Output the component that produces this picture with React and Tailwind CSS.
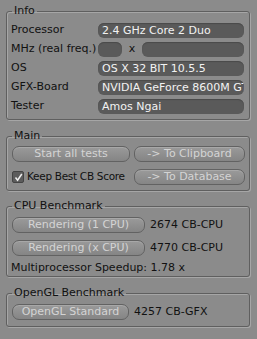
const font = { fontFamily: '"DejaVu Sans", "Liberation Sans", sans-serif' };

const boxClass =
  'mx-[6px] w-[244px] rounded-[3px] border border-[#5f5f5f] px-[4px] shadow-[inset_1px_1px_0_#a6a6a6,1px_1px_0_#a6a6a6]';
const legendClass = 'ml-[1px] h-[14px] px-[2px] leading-[14px] text-[#111]';
const fieldClass =
  'h-[15px] overflow-hidden whitespace-nowrap rounded-[6px] bg-[#5a5a5a] px-[4px] leading-[15px] text-[#f2f2f2] shadow-[inset_0_1px_1px_#4a4a4a]';
const buttonClass =
  'flex h-[16px] items-center justify-center whitespace-nowrap rounded-[7px] border border-[#626262] bg-gradient-to-b from-[#9a9a9a] to-[#858585] leading-[14px] text-[#d4d4d4] shadow-[inset_0_1px_0_#a8a8a8]';

function Row({ label, children }) {
  return (
    <div className="flex h-[15px] items-center">
      <span className="w-[87px] shrink-0 whitespace-nowrap text-[#111]">{label}</span>
      {children}
    </div>
  );
}

export default function App() {
  return (
    <div className="h-[339px] w-[257px] overflow-hidden bg-[#8b8b8b] text-[11px]" style={font}>
      <fieldset className={`${boxClass} mt-[4px] pb-[5px]`}>
        <legend className={legendClass}>Info</legend>
        <div className="mt-[5px] flex flex-col gap-[4px]">
          <Row label="Processor">
            <div className={`${fieldClass} w-[146px]`}>2.4 GHz Core 2 Duo</div>
          </Row>
          <Row label="MHz (real freq.)">
            <div className={`${fieldClass} w-[24px]`} />
            <span className="w-[20px] text-center text-[#111]">x</span>
            <div className={`${fieldClass} w-[102px]`} />
          </Row>
          <Row label="OS">
            <div className={`${fieldClass} w-[146px]`}>OS X 32 BIT 10.5.5</div>
          </Row>
          <Row label="GFX-Board">
            <div className={`${fieldClass} w-[146px]`}>NVIDIA GeForce 8600M GT</div>
          </Row>
          <Row label="Tester">
            <div className={`${fieldClass} w-[146px]`}>Amos Ngai</div>
          </Row>
        </div>
      </fieldset>

      <fieldset className={`${boxClass} mt-[9px] pb-[5px]`}>
        <legend className={legendClass}>Main</legend>
        <div className="mt-[3px] flex flex-col gap-[7px]">
          <div className="flex gap-[4px] pl-[1px]">
            <div className={`${buttonClass} w-[118px]`}>Start all tests</div>
            <div className={`${buttonClass} w-[111px]`}>-&gt; To Clipboard</div>
          </div>
          <div className="flex items-center gap-[4px] pl-[1px]">
            <div className="flex w-[118px] items-center gap-[3px] text-[#111]">
              <span className="flex h-[12px] w-[12px] shrink-0 items-center justify-center rounded-[2px] border border-[#444] bg-[#5c5c5c]">
                <svg width="9" height="9" viewBox="0 0 9 9">
                  <path d="M1.5 4.5 L3.6 7.2 L7.8 1" fill="none" stroke="#f0f0f0" strokeWidth="1.5" />
                </svg>
              </span>
              <span className="whitespace-nowrap text-[10.5px] tracking-[-0.3px]">Keep Best CB Score</span>
            </div>
            <div className={`${buttonClass} w-[111px]`}>-&gt; To Database</div>
          </div>
        </div>
      </fieldset>

      <fieldset className={`${boxClass} mt-[8px] pb-[1px]`}>
        <legend className={legendClass}>CPU Benchmark</legend>
        <div className="mt-[4px] flex flex-col gap-[6px] pl-[1px]">
          <div className="flex items-center gap-[5px]">
            <div className={`${buttonClass} w-[133px]`}>Rendering (1 CPU)</div>
            <span className="text-[#111]">2674 CB-CPU</span>
          </div>
          <div className="flex items-center gap-[5px]">
            <div className={`${buttonClass} w-[133px]`}>Rendering (x CPU)</div>
            <span className="text-[#111]">4770 CB-CPU</span>
          </div>
        </div>
        <div className="mt-[5px] h-[14px] whitespace-nowrap leading-[14px] text-[#111]">Multiprocessor Speedup: 1.78 x</div>
      </fieldset>

      <fieldset className={`${boxClass} mt-[9px] pb-[5px]`}>
        <legend className={legendClass}>OpenGL Benchmark</legend>
        <div className="mt-[4px] flex items-center gap-[5px] pl-[1px]">
          <div className={`${buttonClass} w-[117px]`}>OpenGL Standard</div>
          <span className="text-[#111]">4257 CB-GFX</span>
        </div>
      </fieldset>
    </div>
  );
}
